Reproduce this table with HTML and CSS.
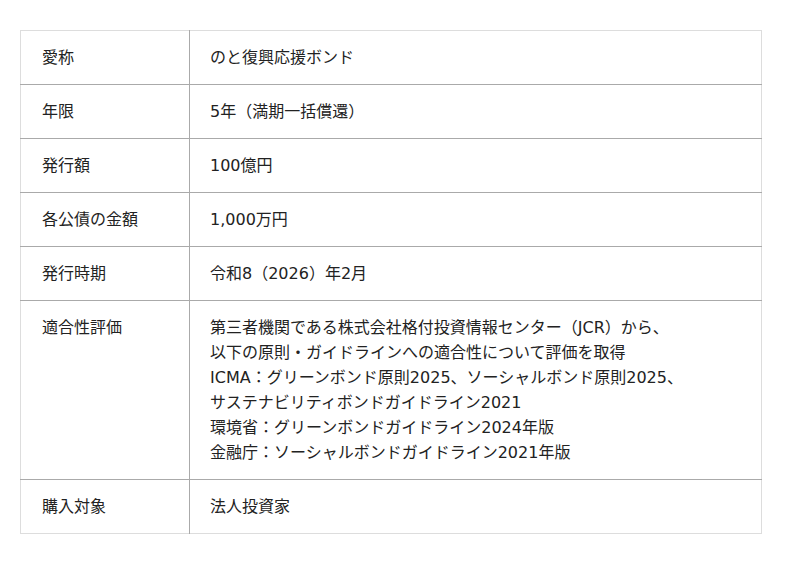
FILE: index.html
```html
<!DOCTYPE html>
<html lang="ja">
<head>
<meta charset="utf-8">
<link rel="stylesheet" href="styles.css">
</head>
<body>
<table class="spec">
  <tbody>
    <tr><th>愛称</th><td>のと復興応援ボンド</td></tr>
    <tr><th>年限</th><td>5年（満期一括償還）</td></tr>
    <tr><th>発行額</th><td>100億円</td></tr>
    <tr><th>各公債の金額</th><td>1,000万円</td></tr>
    <tr><th>発行時期</th><td>令和8（2026）年2月</td></tr>
    <tr><th>適合性評価</th><td>第三者機関である株式会社格付投資情報センター（JCR）から、<br>以下の原則・ガイドラインへの適合性について評価を取得<br>ICMA：グリーンボンド原則2025、ソーシャルボンド原則2025、<br>サステナビリティボンドガイドライン2021<br>環境省：グリーンボンドガイドライン2024年版<br>金融庁：ソーシャルボンドガイドライン2021年版</td></tr>
    <tr><th>購入対象</th><td>法人投資家</td></tr>
  </tbody>
</table>
</body>
</html>
```
FILE: styles.css
```css
html, body {
  margin: 0;
  padding: 0;
  background: #fff;
}
body {
  padding: 30px 38px 0 20px;
  font-family: "DejaVu Sans", "Noto Sans CJK JP", sans-serif;
  font-size: 16px;
  line-height: 25px;
  color: #222;
}
.spec {
  width: 742px;
  border-collapse: collapse;
  border: 1px solid #ddd;
}
.spec th,
.spec td {
  text-align: left;
  vertical-align: top;
  font-weight: normal;
  padding: 14px 20px;
  border-top: 1px solid #aaa;
}
.spec tr:first-child th,
.spec tr:first-child td {
  border-top: 1px solid #ddd;
}
.spec th {
  width: 127px;
  padding-left: 21px;
  border-right: 1px solid #aaa;
}
```
